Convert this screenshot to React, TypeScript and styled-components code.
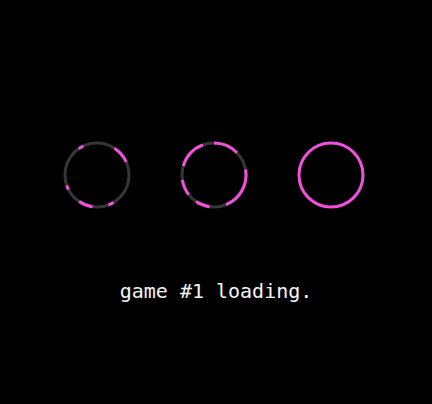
import React from "react";
import styled, { createGlobalStyle } from "styled-components";

const Global = createGlobalStyle`
  html, body { margin: 0; padding: 0; background: #000; }
  body { width: 432px; height: 404px; overflow: hidden; }
`;

const Page = styled.div`
  width: 432px;
  height: 404px;
  background: #000;
  display: flex;
  flex-direction: column;
  align-items: center;
  padding-top: 140px;
  box-sizing: border-box;
`;

const Row = styled.div`
  display: flex;
  gap: 47px;
  padding-right: 5px;
`;

const Caption = styled.div`
  margin-top: 69px;
  font-family: "DejaVu Sans Mono", "Liberation Mono", monospace;
  font-size: 20px;
  line-height: 24px;
  color: #f4f4f4;
  letter-spacing: 0;
`;

const PINK = "#f24fdc";
const GRAY = "#363636";

const SIZE = 70;
const C = 35;
const R = 32;

function arc(a0: number, a1: number) {
  const rad = (a: number) => ((a - 90) * Math.PI) / 180;
  const x0 = C + R * Math.cos(rad(a0));
  const y0 = C + R * Math.sin(rad(a0));
  const x1 = C + R * Math.cos(rad(a1));
  const y1 = C + R * Math.sin(rad(a1));
  const large = a1 - a0 > 180 ? 1 : 0;
  return `M ${x0.toFixed(2)} ${y0.toFixed(2)} A ${R} ${R} 0 ${large} 1 ${x1.toFixed(2)} ${y1.toFixed(2)}`;
}

const Ring: React.FC<{ segments: [number, number][]; full?: boolean }> = ({ segments, full }) => (
  <svg width={SIZE} height={SIZE} viewBox={`0 0 ${SIZE} ${SIZE}`}>
    <circle cx={C} cy={C} r={R} fill="none" stroke={full ? PINK : GRAY} strokeWidth={3} />
    {!full &&
      segments.map(([a, b], i) => (
        <path key={i} d={arc(a, b)} fill="none" stroke={PINK} strokeWidth={3} />
      ))}
  </svg>
);

export default function App() {
  return (
    <>
      <Global />
      <Page>
        <Row>
          <Ring segments={[[33, 66], [149, 159], [188, 214], [243, 251], [325, 335]]} />
          <Ring segments={[[0, 46], [80, 158], [188, 214], [232, 261], [286, 340]]} />
          <Ring segments={[]} full />
        </Row>
        <Caption>game #1 loading.</Caption>
      </Page>
    </>
  );
}
